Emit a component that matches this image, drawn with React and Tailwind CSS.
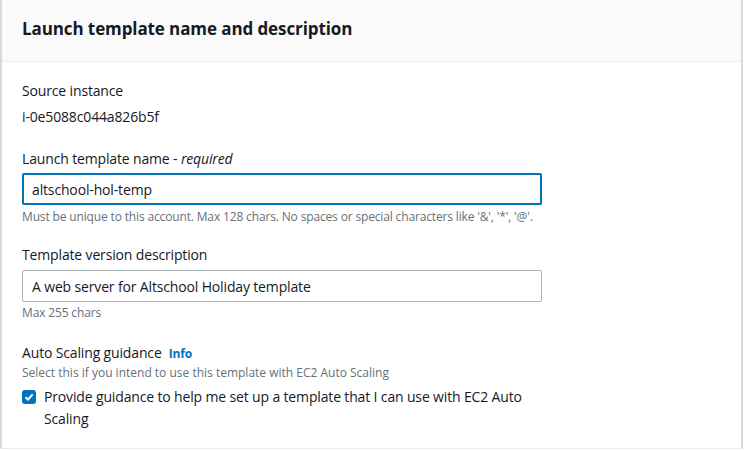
export default function App() {
  return (
    <div
      className="w-[745px] h-[451px] bg-white overflow-hidden"
      style={{ fontFamily: '"Open Sans", "Noto Sans", Arial, sans-serif' }}
    >
      <div className="w-[743px] h-[449px] border-l-2 border-r-2 border-b border-[#d5dbdb] border-b-[#eaeded] bg-white">
        {/* Header */}
        <div className="h-[62px] bg-[#fafafa] border-b border-[#eaeded] px-[20px] pt-[18px]">
          <h2 className="text-[17px] font-bold text-[#16191f] leading-[22px] tracking-[-0.1px]">
            Launch template name and description
          </h2>
        </div>

        <div className="px-[20px] pt-[18px] text-[14px] text-[#16191f] tracking-[-0.15px]">
          {/* Source instance */}
          <div className="leading-[22px]">Source instance</div>
          <div className="leading-[22px] mt-[4px]">i-0e5088c044a826b5f</div>

          {/* Launch template name */}
          <div className="mt-[20px] leading-[22px]">
            Launch template name - <i>required</i>
          </div>
          <div className="mt-[3px] w-[520px] h-[32px] border-2 border-[#0073bb] rounded-[2px] px-[8px] flex items-center">
            altschool-hol-temp
          </div>
          <div className="text-[12px] text-[#687078] leading-[16px] mt-[4px]">
            Must be unique to this account. Max 128 chars. No spaces or special characters like '&amp;', '*', '@'.
          </div>

          {/* Template version description */}
          <div className="mt-[19px] leading-[22px]">Template version description</div>
          <div className="mt-[4px] w-[520px] h-[32px] border border-[#aab7b8] rounded-[2px] px-[9px] flex items-center">
            A web server for Altschool Holiday template
          </div>
          <div className="text-[12px] text-[#687078] leading-[16px] mt-[3px]">Max 255 chars</div>

          {/* Auto Scaling guidance */}
          <div className="mt-[21px] leading-[22px] flex items-baseline gap-[7px]">
            <span>Auto Scaling guidance</span>
            <span className="text-[12px] font-bold text-[#0073bb]">Info</span>
          </div>
          <div className="text-[12px] text-[#687078] leading-[16px] tracking-normal">
            Select this if you intend to use this template with EC2 Auto Scaling
          </div>
          <div className="mt-[5px] flex gap-[8px]">
            <div className="mt-[4px] w-[14px] h-[14px] shrink-0 rounded-[3px] bg-[#0073bb] flex items-center justify-center">
              <svg width="10" height="10" viewBox="0 0 10 10">
                <path d="M1.5 5.2 L4 7.6 L8.6 2.3" fill="none" stroke="white" strokeWidth="2" />
              </svg>
            </div>
            <div className="w-[490px] leading-[22px]">
              Provide guidance to help me set up a template that I can use with EC2 Auto Scaling
            </div>
          </div>
        </div>
      </div>
    </div>
  );
}
